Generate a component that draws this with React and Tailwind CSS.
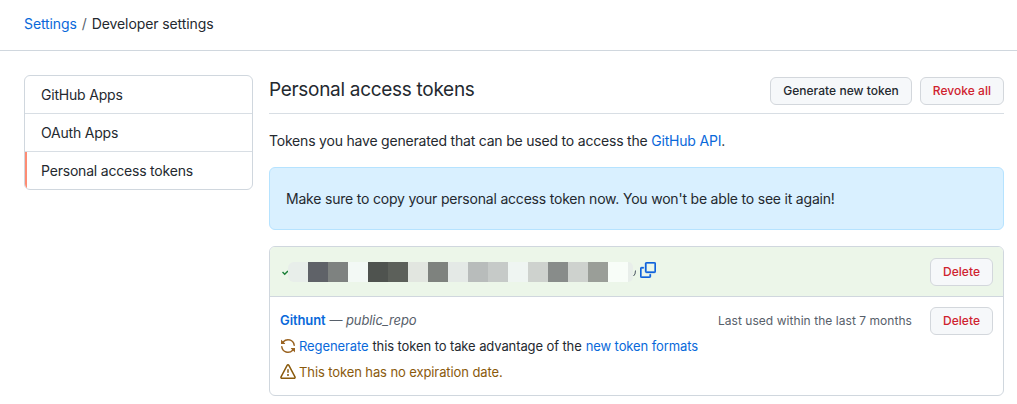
import React from "react";

const mosaic = [
  "bg-[#e8eeea]", "bg-[#5f6268]", "bg-[#7e8280]", "bg-[#f3f9f5]", "bg-[#4f534f]", "bg-[#5c605a]",
  "bg-[#e2e6e0]", "bg-[#7e827e]", "bg-[#e4e9e6]", "bg-[#b8bcbb]", "bg-[#c6cac8]", "bg-[#eff5f2]",
  "bg-[#ced2ce]", "bg-[#888c8a]", "bg-[#ced2ce]", "bg-[#9a9e98]", "bg-[#f8fdf8]",
];

function Btn({ children, danger }) {
  return (
    <button className={`h-[28px] rounded-md border border-[#d3d7dc] bg-[#f6f8fa] px-3 text-xs font-medium tracking-[0.03px] ${danger ? "text-[#cf222e]" : "text-[#24292f]"}`}>
      {children}
    </button>
  );
}

export default function App() {
  return (
    <div className="h-[404px] overflow-hidden bg-white font-['Inter',sans-serif] text-sm tracking-[-0.2px] text-[#24292f]">
      <header className="flex h-[51px] items-center border-b border-[#d0d7de] pb-[3px] pl-6 tracking-[-0.1px]">
        <a className="text-[#0969da]">Settings</a>
        <span className="mx-[5px] text-[#57606a]">/</span>
        <span>Developer settings</span>
      </header>

      <div className="flex gap-4 pl-6 pr-[13px] pt-6">
        <nav className="h-[115px] w-[229px] shrink-0 overflow-hidden rounded-md border border-[#d0d7de]">
          <div className="flex h-[38px] items-center border-b border-[#d8dee4] pl-4">GitHub Apps</div>
          <div className="flex h-[38px] items-center border-b border-[#d8dee4] pl-4">OAuth Apps</div>
          <div className="flex h-[37px] items-center border-l-2 border-[#fd8c73] pl-[14px]">Personal access tokens</div>
        </nav>

        <main className="min-w-0 flex-1">
          <div className="flex h-[39px] items-start justify-between border-b border-[#d8dee4] pt-0.5">
            <h2 className="text-[19px] leading-[26px] font-normal tracking-[-0.3px]">Personal access tokens</h2>
            <div className="flex gap-2">
              <Btn>Generate new token</Btn>
              <Btn danger>Revoke all</Btn>
            </div>
          </div>

          <p className="mt-[17px] leading-5">
            Tokens you have generated that can be used to access the <a className="text-[#0969da]">GitHub API</a>.
          </p>

          <div className="mt-4 flex h-[63px] items-center rounded-md border border-[#b6e3ff] bg-[#d9f0ff] px-4">
            Make sure to copy your personal access token now. You won't be able to see it again!
          </div>

          <div className="mt-4 h-[150px] overflow-hidden rounded-md border border-[#d0d7de]">
            <div className="flex h-[50px] items-center justify-between border-b border-[#d0d7de] bg-[#ecf6e9] pl-3 pr-[10px]">
              <div className="flex items-center">
                <svg width="6" height="6" viewBox="0 0 6 6" fill="none" className="mt-0.5 shrink-0">
                  <path d="M0.5 2l2.2 2.2L6 1" stroke="#1a7f37" strokeWidth="1.5" />
                </svg>
                <div className="flex h-5 overflow-hidden rounded-l-md">
                  {mosaic.map((c, i) => (
                    <div key={i} className={`h-5 w-5 shrink-0 ${c}`} />
                  ))}
                  <div className="h-5 w-[5px] shrink-0 rounded-r-md bg-[#e8eeea]" />
                </div>
                <svg width="3" height="7" viewBox="0 0 3 7" fill="none" className="mt-1 shrink-0">
                  <path d="M2.5 0.5L2 4L0.5 6" stroke="#4b5563" strokeWidth="1" />
                </svg>
                <svg width="16" height="16" viewBox="0 0 16 16" fill="#0f62dc" stroke="#0f62dc" strokeWidth="0.3" className="mb-[3px] ml-1 shrink-0">
                  <path d="M0 6.75C0 5.784.784 5 1.75 5h1.5a.75.75 0 0 1 0 1.5h-1.5a.25.25 0 0 0-.25.25v7.5c0 .138.112.25.25.25h7.5a.25.25 0 0 0 .25-.25v-1.5a.75.75 0 0 1 1.5 0v1.5A1.75 1.75 0 0 1 9.25 16h-7.5A1.75 1.75 0 0 1 0 14.25Z" />
                  <path d="M5 1.75C5 .784 5.784 0 6.75 0h7.5C15.216 0 16 .784 16 1.75v7.5A1.75 1.75 0 0 1 14.25 11h-7.5A1.75 1.75 0 0 1 5 9.25Zm1.75-.25a.25.25 0 0 0-.25.25v7.5c0 .138.112.25.25.25h7.5a.25.25 0 0 0 .25-.25v-7.5a.25.25 0 0 0-.25-.25Z" />
                </svg>
              </div>
              <Btn danger>Delete</Btn>
            </div>

            <div className="flex items-start justify-between pl-[10px] pr-[10px] pt-[10px]">
              <div className="text-[13px] tracking-[-0.1px]">
                <div className="flex h-[26px] items-center">
                  <a className="font-semibold text-[#0969da]">Githunt</a>
                  <span className="ml-1 text-[#57606a]">— <em>public_repo</em></span>
                </div>
                <div className="flex h-[26px] items-center">
                  <svg width="16" height="16" viewBox="0 0 16 16" fill="#9a6321" className="mr-[3px] shrink-0">
                    <path d="M1.705 8.005a.75.75 0 0 1 .834.656 5.5 5.5 0 0 0 9.592 2.97l-1.204-1.204a.25.25 0 0 1 .177-.427h3.646a.25.25 0 0 1 .25.25v3.646a.25.25 0 0 1-.427.177l-1.38-1.38A7.002 7.002 0 0 1 1.05 8.84a.75.75 0 0 1 .656-.834ZM8 2.5a5.487 5.487 0 0 0-4.131 1.869l1.204 1.204A.25.25 0 0 1 4.896 6H1.25A.25.25 0 0 1 1 5.75V2.104a.25.25 0 0 1 .427-.177l1.38 1.38A7.002 7.002 0 0 1 14.95 7.16a.75.75 0 0 1-1.49.178A5.5 5.5 0 0 0 8 2.5Z" />
                  </svg>
                  <a className="text-[#0969da]">Regenerate</a>
                  <span className="ml-1">this token to take advantage of the</span>
                  <a className="ml-1 text-[#0969da]">new token formats</a>
                </div>
                <div className="flex h-[26px] items-center text-[#8a5a0c]">
                  <svg width="16" height="16" viewBox="0 0 16 16" fill="currentColor" className="mr-[3px] shrink-0">
                    <path d="M6.457 1.047c.659-1.234 2.427-1.234 3.086 0l6.082 11.378A1.75 1.75 0 0 1 14.082 15H1.918a1.75 1.75 0 0 1-1.543-2.575Zm1.763.707a.25.25 0 0 0-.44 0L1.698 13.132a.25.25 0 0 0 .22.368h12.164a.25.25 0 0 0 .22-.368Zm.53 3.996v2.5a.75.75 0 0 1-1.5 0v-2.5a.75.75 0 0 1 1.5 0ZM9 11a1 1 0 1 1-2 0 1 1 0 0 1 2 0Z" />
                  </svg>
                  This token has no expiration date.
                </div>
              </div>
              <div className="flex items-center gap-[18px]">
                <span className="text-xs tracking-[0.05px] text-[#57606a]">Last used within the last 7 months</span>
                <Btn danger>Delete</Btn>
              </div>
            </div>
          </div>
        </main>
      </div>
    </div>
  );
}
